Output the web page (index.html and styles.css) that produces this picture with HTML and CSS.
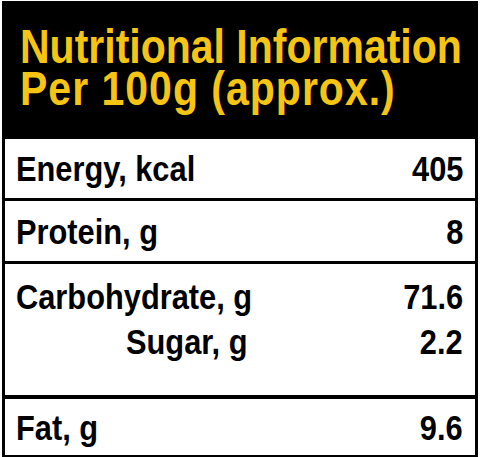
FILE: index.html
```html
<!DOCTYPE html>
<html lang="en">
<head>
  <meta charset="UTF-8">
  <meta name="viewport" content="width=device-width, initial-scale=1.0">
  <title>Nutritional Information</title>
  <link rel="stylesheet" href="styles.css">
</head>
<body>
  <div class="label">
    <div class="label-head">
      <div class="head-text">
        <div class="head-line">Nutritional Information</div>
        <div class="head-line head-line-sub">Per 100g (approx.)</div>
      </div>
    </div>

    <div class="row row-energy">
      <span class="name">Energy, kcal</span>
      <span class="value">405</span>
    </div>

    <div class="row row-protein">
      <span class="name">Protein, g</span>
      <span class="value">8</span>
    </div>

    <div class="row row-carb">
      <div class="line">
        <span class="name">Carbohydrate, g</span>
        <span class="value">71.6</span>
      </div>
      <div class="line sub">
        <span class="name">Sugar, g</span>
        <span class="value">2.2</span>
      </div>
    </div>

    <div class="row row-fat">
      <span class="name">Fat, g</span>
      <span class="value">9.6</span>
    </div>
  </div>
</body>
</html>
```

FILE: styles.css
```css
body {
  margin: 0;
  background-color: #fff;
  font-family: "Liberation Sans", Arial, sans-serif;
  font-weight: bold;
}

.label {
  width: 476px;
  box-sizing: border-box;
  margin: 1px 0 0 2px;
  border: 3px solid #000;
  border-bottom-width: 4px;
  background-color: #fff;
}

.label-head {
  height: 135px;
  box-sizing: border-box;
  padding: 22px 10px 0 15px;
  background-color: #000;
  color: #f6c514;
  overflow: hidden;
}

/* the label type is a tall, slightly condensed grotesque */
.head-text {
  font-size: 41px;
  line-height: 36.5px;
  transform: scaleY(1.15);
  transform-origin: top left;
}

.head-line {
  white-space: nowrap;
}

.head-line-sub {
  letter-spacing: 1px;
}

.row {
  display: flex;
  align-items: center;
  justify-content: space-between;
  padding: 0 12px 0 11px;
  color: #000;
  font-size: 35px;
  line-height: 45px;
}

.row-energy {
  height: 59px;
}

.row-protein {
  height: 60px;
  border-top: 3px solid #000;
}

.row-carb {
  height: 121px;
  border-top: 3px solid #000;
  display: block;
  padding-top: 10px;
}

.row-fat {
  height: 56px;
  border-top: 4px solid #000;
}

.line {
  display: flex;
  justify-content: space-between;
}

.sub .name {
  margin-left: 110px;
}

.name,
.value {
  display: inline-block;
  white-space: nowrap;
  transform: scaleX(0.88);
}

.name {
  transform-origin: left;
}

.value {
  transform-origin: right;
}
```
